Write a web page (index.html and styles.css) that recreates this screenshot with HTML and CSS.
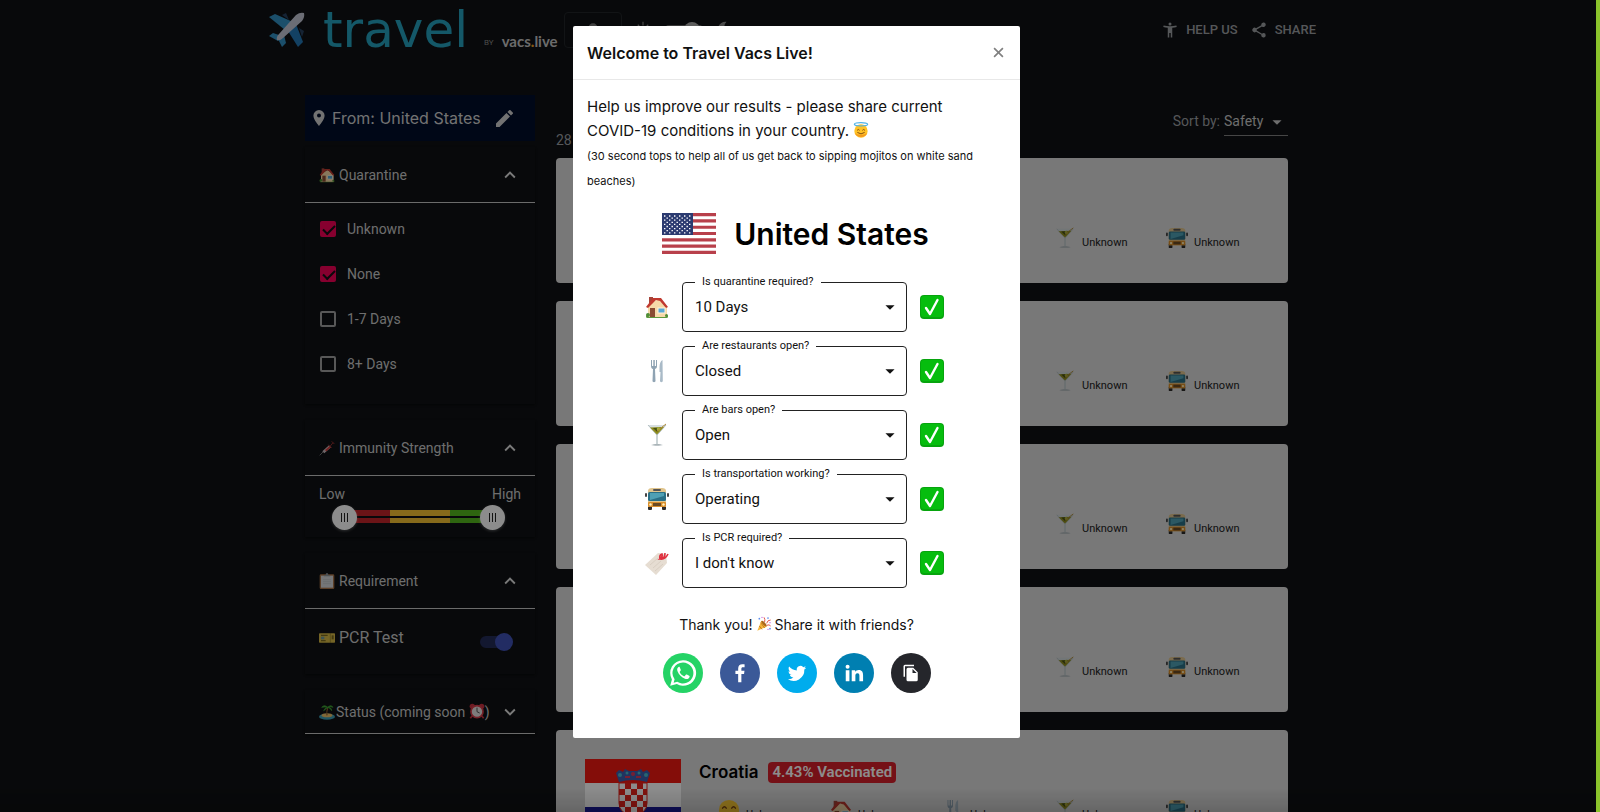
FILE: index.html
```html
<!DOCTYPE html>
<html lang="en">
<head>
    <meta charset="UTF-8">
    <meta name="viewport" content="width=device-width, initial-scale=1.0">
    <title>Travel Vacs Live</title>
    <link rel="stylesheet" href="styles.css">
</head>
<body>
    <!-- Emoji and icon sprites -->
    <svg class="sprites" aria-hidden="true">
        <symbol id="house" viewBox="0 0 24 24">
            <rect x="1" y="20" width="22" height="3" rx="1.5" fill="#5c9a3c"/>
            <rect x="4" y="2" width="4" height="7" fill="#a5443a"/>
            <path d="M3 11L13 4l9 8v10H3z" fill="#f6d9a8"/>
            <path d="M1 12L8 3h8l7 9-2 1-6-7-4-1-8 8z" fill="#c0392f"/>
            <rect x="5" y="13" width="5" height="9" fill="#8a4b32"/>
            <rect x="13" y="13" width="7" height="5" fill="#59a9d6" stroke="#fff3dc"/>
            <circle cx="3" cy="20" r="2" fill="#4f8d36"/><circle cx="21.5" cy="20.5" r="1.5" fill="#4f8d36"/>
        </symbol>
        <symbol id="cutlery" viewBox="0 0 24 24">
            <path d="M6 1v6c0 2 1 3 2 3l-.5 12c0 1.500 3 1.500 3 0L10 10c1.500-.5 2-1.500 2-3V1h-1v6h-1.200V1H8.300v6H7V1z" fill="#8fa3b3"/>
            <path d="M17.500 1c-2 1-3 4-3 7v5h1l-.5 9c0 1.500 2.800 1.500 2.800 0z" fill="#a9bac7"/>
        </symbol>
        <symbol id="cocktail" viewBox="0 0 24 24">
            <path d="M3 2h18l-8.300 10v9h-1.400v-9z" fill="#cdd6d8" opacity=".8"/>
            <path d="M3 2l9 10 9-10M12 12v9" fill="none" stroke="#b3bfc2"/>
            <path d="M5 4.500l14-.5-7 7.500z" fill="#8d8b1c"/>
            <path d="M8 5l8-.3-4 4z" fill="#454e16"/>
            <circle cx="13.500" cy="6" r="1.800" fill="#a8b13a"/><path d="M21 1L12 8" stroke="#b08a3a"/>
            <path d="M6 22c3-1.500 9-1.500 12 0-3 1-9 1-12 0z" fill="#aab4b8"/>
        </symbol>
        <symbol id="bus" viewBox="0 0 24 24">
            <rect x="3" y="18" width="4" height="5" rx="1" fill="#2d2a28"/><rect x="17" y="18" width="4" height="5" rx="1" fill="#2d2a28"/>
            <path d="M3 4q0-3 4-3h10q4 0 4 3v16H3z" fill="#e0c48c"/>
            <rect x="8" y="2" width="8" height="2" rx="1" fill="#555"/>
            <rect x="3" y="5" width="18" height="9" rx="1.500" fill="#2a6f86"/><path d="M5 6h14v3L5 13z" fill="#4fa0b4"/>
            <rect x="3" y="15" width="18" height="5" rx="1" fill="#d98e2b"/><rect x="8" y="16" width="8" height="3" fill="#6b4a22"/>
            <circle cx="5.500" cy="17.500" r="1.200" fill="#fff2c2"/><circle cx="18.500" cy="17.500" r="1.200" fill="#fff2c2"/>
            <rect x="0" y="6" width="2" height="4" rx="1" fill="#444"/><rect x="22" y="6" width="2" height="4" rx="1" fill="#444"/>
        </symbol>
        <symbol id="tag" viewBox="0 0 24 24">
            <path d="M0 14L13 2l8 1 1 9-11 12z" fill="#e6ddd2"/>
            <path d="M5 14l8-7M8 17l8-7M10 20l8-7" stroke="#d9cfc3"/>
            <path d="M15 8q-1-4 2-5 1 3-2 5 5 0 5-6M15 8q5 1 8-5" fill="none" stroke="#e0303f" stroke-width="1.600"/>
        </symbol>
        <symbol id="done" viewBox="0 0 24 24">
            <rect width="24" height="24" rx="4" fill="#07a40e"/><rect x="1" y="1" width="22" height="21" rx="3" fill="#06bd0e"/>
            <path d="M6 13l4 6L17.500 5" fill="none" stroke="#fff" stroke-width="2.400" stroke-linecap="round" stroke-linejoin="round"/>
        </symbol>
        <symbol id="angel" viewBox="0 0 24 24">
            <circle cx="12" cy="13.500" r="10" fill="#ffc224"/><path d="M3 17a10 10 0 0 0 18 0q-9 5-18 0z" fill="#f59a1d"/>
            <ellipse cx="12" cy="3.500" rx="10" ry="2.500" fill="none" stroke="#4fb2e8" stroke-width="1.800"/>
            <path d="M6.500 12q1.500-2 3 0M14.500 12q1.500-2 3 0M7 16q5 4 10 0" fill="none" stroke="#7a4312" stroke-width="1.400" stroke-linecap="round"/>
        </symbol>
        <symbol id="smile" viewBox="0 0 24 24">
            <circle cx="12" cy="12" r="11" fill="#ffcc33"/>
            <path d="M5 10q2-3 4 0M15 10q2-3 4 0M7 16q5 4 10 0" fill="none" stroke="#7a4312" stroke-width="1.500" stroke-linecap="round"/>
        </symbol>
        <symbol id="party" viewBox="0 0 24 24">
            <path d="M2 22L8 7q6 3 8 9z" fill="#f3b53c"/><path d="M5 15l4 5M7 10l6 8" stroke="#c97a1e" stroke-width="1.500"/>
            <ellipse cx="12" cy="11.500" rx="2" ry="5.500" transform="rotate(-42 12 11.500)" fill="#a9661c"/>
            <path d="M13 9q1-4-1-7M16 11q1-5 6-5M16 14q4-2 6 1" fill="none" stroke="#e2574c" stroke-width="1.500"/>
            <g fill="#5b8def"><circle cx="5" cy="4" r="1.300"/><circle cx="18" cy="3" r="1.300"/><circle cx="21" cy="19" r="1.300"/></g>
            <g fill="#c25be0"><circle cx="9" cy="2" r="1"/><circle cx="18" cy="20" r="1"/><circle cx="21" cy="10" r="1"/></g>
        </symbol>
        <symbol id="syringe" viewBox="0 0 24 24">
            <path d="M1 23l6-6" stroke="#aaa"/><path d="M5 17L15 8l3 3L8 20z" fill="#c9b9bd"/><path d="M9 15l7-6 2 2-7 6z" fill="#d63b3b"/>
            <path d="M14 7l5 5M17 9l4-5M19 2l4 4" stroke="#8d2e2e" stroke-width="1.500"/>
        </symbol>
        <symbol id="clipboard" viewBox="0 0 24 24">
            <rect x="1" y="2" width="22" height="22" rx="2" fill="#a87347"/><rect x="3" y="4" width="18" height="18" fill="#d5d8da"/>
            <path d="M7 5q0-2 3-2 0-3 2-3t2 3q3 0 3 2z" fill="#8b9298"/><path d="M6 10h12M6 13h12M6 16h12" stroke="#bcc0c3"/>
        </symbol>
        <symbol id="ticket" viewBox="0 0 24 24">
            <rect y="5" width="24" height="14" rx="1" fill="#d5b945"/><path d="M17 5v14" stroke="#6d5f1e" stroke-dasharray="2 1"/>
            <path d="M3 8h10M3 16h7" stroke="#7b6b22" stroke-width="2"/><rect x="3" y="10" width="5" height="4" fill="#6f9a9a"/><rect x="19" y="8" width="3" height="6" fill="#7b6b22"/>
        </symbol>
        <symbol id="island" viewBox="0 0 24 24">
            <ellipse cx="12" cy="19" rx="12" ry="4.500" fill="#3c9db5"/><ellipse cx="12" cy="17" rx="8" ry="3" fill="#e9bd66"/>
            <path d="M12 17q-1-6 1-11" fill="none" stroke="#8a5a2b" stroke-width="1.800"/>
            <path d="M13 5Q8 0 4 5q5-1 9 0-5 1-6 5 4-3 6-5 5 1 6 5 0-5-6-5 4-2 8 0-3-5-8 0z" fill="#3fa535" stroke="#3fa535"/>
        </symbol>
        <symbol id="clock" viewBox="0 0 24 24">
            <circle cx="5" cy="5" r="4" fill="#c83240"/><circle cx="19" cy="5" r="4" fill="#c83240"/>
            <path d="M5 19l-3 4M19 19l3 4" stroke="#c83240" stroke-width="2.500"/>
            <circle cx="12" cy="13" r="9" fill="#e6e2e2" stroke="#d63c4a" stroke-width="2.500"/><path d="M12 7v6l4 2" fill="none" stroke="#555" stroke-width="1.500"/>
        </symbol>
        <symbol id="up" viewBox="0 0 24 24"><path d="M12 8l-6 6 1.410 1.410L12 10.830l4.590 4.580L18 14z" fill="currentColor"/></symbol>
        <symbol id="down" viewBox="0 0 24 24"><path d="M16.590 8.590L12 13.170 7.410 8.590 6 10l6 6 6-6z" fill="currentColor"/></symbol>
        <symbol id="arrow" viewBox="0 0 24 24"><path d="M7 10l5 5 5-5z" fill="currentColor"/></symbol>
    </svg>

    <div class="page">
        <header class="header">
            <svg class="plane" viewBox="0 0 36 36" aria-hidden="true">
                <path d="M0 5l6-3 18 8-8 8z" fill="#3290c3"/><path d="M27 12l7 18-5 5-10-16z" fill="#2477b4"/>
                <path d="M0 24l4-3 9 3-4 5zM9 27l6-4 2 8-4 4z" fill="#3290c3"/>
                <path d="M13 3l4-2 3 7zM30 16l5 3-2 6z" fill="#27405f"/>
                <path d="M8 28q-1-3 2-6L27 3q4-3 8-2 1 4-2 8L14 26q-3 3-6 2z" fill="#c3c7d6"/>
            </svg>
            <span class="logo">travel</span>
            <span class="by">BY</span>
            <span class="brand">vacs<b>.</b>live</span>
            <button class="coffee" aria-label="Support"><svg viewBox="0 0 24 24"><circle cx="12" cy="12" r="8" fill="#777"/></svg></button>
            <svg class="sun" viewBox="0 0 24 24" aria-hidden="true"><circle cx="12" cy="12" r="4" fill="#888"/><path d="M12 1v5M12 18v5M1 12h5M18 12h5M5 5l3 3M16 16l3 3M19 5l-3 3M5 19l3-3" stroke="#888" stroke-width="1.500"/></svg>
            <input type="checkbox" class="theme" aria-label="Dark theme" checked>
            <svg class="moon" viewBox="0 0 24 24" aria-hidden="true"><path d="M14 1a11 11 0 1 0 8 17A10 10 0 0 1 14 1z" fill="#888"/></svg>
            <nav class="nav">
                <a href="#help"><svg viewBox="0 0 24 24"><path d="M20.500 6c-2.610.7-5.670 1-8.500 1s-5.890-.3-8.500-1L3 8c1.860.5 4 .830 6 1v13h2v-6h2v6h2V9c2-.170 4.140-.5 6-1zM12 6a2 2 0 1 0 0-4 2 2 0 0 0 0 4z" fill="currentColor"/></svg>HELP US</a>
                <a href="#share"><svg viewBox="0 0 24 24"><path d="M18 16.080c-.760 0-1.440.3-1.960.770L8.910 12.700a3.300 3.300 0 0 0 0-1.400l7.050-4.110A3 3 0 1 0 15 5c0 .240.040.470.090.7L8.040 9.810a3 3 0 1 0 0 4.380l7.120 4.160a2.920 2.920 0 1 0 2.840-2.270z" fill="currentColor"/></svg>SHARE</a>
            </nav>
        </header>

        <div class="content">
            <aside class="sidebar">
                <button class="from">
                    <svg class="pin" viewBox="5 2 14 20"><path d="M12 2a7 7 0 0 0-7 7c0 5.250 7 13 7 13s7-7.750 7-13a7 7 0 0 0-7-7zm0 9.500a2.500 2.500 0 1 1 0-5 2.500 2.500 0 0 1 0 5z" fill="currentColor"/></svg>
                    <span>From: United States</span>
                    <svg class="pencil" viewBox="3 3 18 18"><path d="M3 17.250V21h3.750L17.810 9.940l-3.750-3.750zM20.710 7.040a1 1 0 0 0 0-1.410l-2.340-2.340a1 1 0 0 0-1.410 0l-1.830 1.830 3.750 3.750z" fill="currentColor"/></svg>
                </button>

                <section class="panel quarantine">
                    <button class="panel-head"><svg class="emoji"><use href="#house"/></svg><span>Quarantine</span><svg class="chevron"><use href="#up"/></svg></button>
                    <div class="checks">
                        <label><input type="checkbox" checked>Unknown</label>
                        <label><input type="checkbox" checked>None</label>
                        <label><input type="checkbox">1-7 Days</label>
                        <label><input type="checkbox">8+ Days</label>
                    </div>
                </section>

                <section class="panel">
                    <button class="panel-head"><svg class="emoji"><use href="#syringe"/></svg><span>Immunity Strength</span><svg class="chevron"><use href="#up"/></svg></button>
                    <div class="strength">
                        <div class="ends"><label for="low">Low</label><label for="high">High</label></div>
                        <div class="range">
                            <input type="range" id="low" value="0">
                            <input type="range" id="high" value="100">
                        </div>
                    </div>
                </section>

                <section class="panel">
                    <button class="panel-head"><svg class="emoji"><use href="#clipboard"/></svg><span>Requirement</span><svg class="chevron"><use href="#up"/></svg></button>
                    <label class="pcr"><svg class="emoji"><use href="#ticket"/></svg><span>PCR Test</span><input type="checkbox" class="switch" checked></label>
                </section>

                <section class="panel">
                    <button class="panel-head status"><svg class="emoji"><use href="#island"/></svg><span>Status (coming soon <svg class="emoji"><use href="#clock"/></svg>)</span><svg class="chevron"><use href="#down"/></svg></button>
                </section>
            </aside>

            <main class="results">
                <div class="results-head">
                    <span>28</span>
                    <div class="sort">
                        <label for="sort">Sort by:</label>
                        <div class="sort-box"><select id="sort"><option>Safety</option></select><svg><use href="#arrow"/></svg></div>
                    </div>
                </div>

                <article class="card blank">
                    <div class="stats">
                        <span class="stat"><svg><use href="#cocktail"/></svg>Unknown</span>
                        <span class="stat"><svg><use href="#bus"/></svg>Unknown</span>
                    </div>
                </article>
                <article class="card blank">
                    <div class="stats">
                        <span class="stat"><svg><use href="#cocktail"/></svg>Unknown</span>
                        <span class="stat"><svg><use href="#bus"/></svg>Unknown</span>
                    </div>
                </article>
                <article class="card blank">
                    <div class="stats">
                        <span class="stat"><svg><use href="#cocktail"/></svg>Unknown</span>
                        <span class="stat"><svg><use href="#bus"/></svg>Unknown</span>
                    </div>
                </article>
                <article class="card blank">
                    <div class="stats">
                        <span class="stat"><svg><use href="#cocktail"/></svg>Unknown</span>
                        <span class="stat"><svg><use href="#bus"/></svg>Unknown</span>
                    </div>
                </article>
                <article class="card">
                    <svg class="flag" viewBox="0 0 96 72" role="img" aria-label="Flag of Croatia">
                        <rect width="96" height="24" fill="#f01812"/><rect y="24" width="96" height="24" fill="#fff"/><rect y="48" width="96" height="24" fill="#1a1a9c"/>
                        <path d="M34 24h28v20q0 11-14 12-14-1-14-12z" fill="#fff" stroke="#e8241c"/>
                        <path d="M40 24h6v6h-6zM52 24h6v6h-6zM34 30h6v6h-6zM46 30h6v6h-6zM58 30h4v6h-4zM40 36h6v6h-6zM52 36h6v6h-6zM34 42h6v6h-6zM46 42h6v6h-6zM58 42h4v6h-4zM40 48h6v6h-6zM52 48h6v6h-6z" fill="#e8241c"/>
                        <path d="M34 23l-3-9 3-3 4 2 2-3 4 2h8l4-2 2 3 4-2 3 3-3 9q-14-4-28 0z" fill="#3b5fb0"/>
                        <g fill="#49b8cc"><circle cx="35" cy="16" r="2"/><circle cx="42" cy="14" r="1.500"/><circle cx="54" cy="14" r="1.500"/><circle cx="61" cy="16" r="2"/></g>
                        <g fill="#d83a5c"><path d="M40 17h5v2h-5zM51 17h5v2h-5z"/><circle cx="48" cy="15" r="2"/></g>
                    </svg>
                    <div class="info">
                        <h2>Croatia <span class="badge">4.43% Vaccinated</span></h2>
                        <div class="stats">
                            <span class="stat"><svg><use href="#smile"/></svg>Unknown</span>
                            <span class="stat"><svg><use href="#house"/></svg>Unknown</span>
                            <span class="stat"><svg><use href="#cutlery"/></svg>Unknown</span>
                            <span class="stat"><svg><use href="#cocktail"/></svg>Unknown</span>
                            <span class="stat"><svg><use href="#bus"/></svg>Unknown</span>
                        </div>
                    </div>
                </article>
            </main>
        </div>
    </div>

    <div class="overlay">
        <div class="modal" role="dialog" aria-labelledby="modal-title">
            <div class="modal-head">
                <h1 id="modal-title">Welcome to Travel Vacs Live!</h1>
                <button class="close" aria-label="Close"><svg viewBox="0 0 10 10"><path d="M1 1l8 8M9 1L1 9" stroke="#808080" stroke-width="1.500"/></svg></button>
            </div>
            <div class="modal-body">
                <p class="intro">Help us improve our results - please share current COVID-19 conditions in your country. <svg class="emoji"><use href="#angel"/></svg></p>
                <p class="note">(30 second tops to help all of us get back to sipping mojitos on white sand beaches)</p>

                <div class="country">
                    <svg viewBox="0 0 54 41" role="img" aria-label="Flag of the United States">
                        <rect width="54" height="41" fill="#fff"/>
                        <path d="M0 1.600h54M0 7.900h54M0 14.200h54M0 20.500h54M0 26.800h54M0 33.100h54M0 39.400h54" stroke="#b8404b" stroke-width="3.150"/>
                        <rect width="31" height="22" fill="#2b3a70"/>
                        <path d="M2 3h28M2 7.200h28M2 11.400h28M2 15.600h28M2 19.800h28" stroke="#fff" stroke-width="1.300" stroke-dasharray="1.400 3.600"/>
                        <path d="M4.500 5.100h25M4.500 9.300h25M4.500 13.500h25M4.500 17.700h25" stroke="#fff" stroke-width="1.300" stroke-dasharray="1.400 3.600"/>
                    </svg>
                    <h2>United States</h2>
                </div>

                <form class="form">
                    <div class="row">
                        <svg><use href="#house"/></svg>
                        <div class="field"><label for="quarantine">Is quarantine required?</label><select id="quarantine"><option>10 Days</option></select><svg><use href="#arrow"/></svg></div>
                        <svg><use href="#done"/></svg>
                    </div>
                    <div class="row">
                        <svg><use href="#cutlery"/></svg>
                        <div class="field"><label for="restaurants">Are restaurants open?</label><select id="restaurants"><option>Closed</option></select><svg><use href="#arrow"/></svg></div>
                        <svg><use href="#done"/></svg>
                    </div>
                    <div class="row">
                        <svg><use href="#cocktail"/></svg>
                        <div class="field"><label for="bars">Are bars open?</label><select id="bars"><option>Open</option></select><svg><use href="#arrow"/></svg></div>
                        <svg><use href="#done"/></svg>
                    </div>
                    <div class="row">
                        <svg><use href="#bus"/></svg>
                        <div class="field"><label for="transport">Is transportation working?</label><select id="transport"><option>Operating</option></select><svg><use href="#arrow"/></svg></div>
                        <svg><use href="#done"/></svg>
                    </div>
                    <div class="row">
                        <svg><use href="#tag"/></svg>
                        <div class="field"><label for="pcr">Is PCR required?</label><select id="pcr"><option>I don't know</option></select><svg><use href="#arrow"/></svg></div>
                        <svg><use href="#done"/></svg>
                    </div>
                </form>

                <p class="thanks">Thank you! <svg class="emoji"><use href="#party"/></svg>Share it with friends?</p>
                <div class="share">
                    <button class="whatsapp" aria-label="Share on WhatsApp"><svg viewBox="0 0 24 24"><path d="M12 1a11 11 0 0 0-9.500 16.500L1 23l5.700-1.500A11 11 0 1 0 12 1zm0 2a9 9 0 1 1-4.900 16.600L4 20.300l.8-3A9 9 0 0 1 12 3z" fill="#fff"/><path d="M8.500 6.700c-1.300.5-1.900 2-1.200 3.800 1.200 3 3.500 5.300 6.400 6.400 1.900.7 3.500 0 3.900-1.500.1-.6.100-.9-.3-1.100l-2-1c-.4-.1-.6 0-.9.300l-.8 1c-.2.300-.5.300-.8.100-1.500-.7-2.700-1.700-3.500-3.200-.2-.3-.1-.5.100-.7.800-1 .9-1.100.7-1.500l-.9-2.200c-.1-.4-.4-.5-.7-.4z" fill="#fff"/></svg></button>
                    <button class="facebook" aria-label="Share on Facebook"><svg viewBox="0 0 24 24"><path d="M10 22v-9H7V9.500h3V7c0-3 1.800-4.600 4.500-4.600 1.300 0 2.400.1 2.500.2v3h-1.800c-1.400 0-1.700.7-1.700 1.700v2.200h3.400l-.5 3.500h-2.900v9z" fill="#fff"/></svg></button>
                    <button class="twitter" aria-label="Share on Twitter"><svg viewBox="0 0 24 24"><path d="M22 6.200c-.7.300-1.500.5-2.400.7.900-.5 1.500-1.300 1.800-2.300-.8.500-1.700.8-2.600 1a4.100 4.100 0 0 0-7 3.700c-3.400-.2-6.400-1.800-8.400-4.300-1.100 1.900-.5 4.300 1.200 5.500-.7 0-1.300-.2-1.800-.5 0 2 1.400 3.700 3.300 4.100-.6.200-1.200.2-1.900.1.500 1.600 2 2.800 3.900 2.800A8.300 8.300 0 0 1 2 18.700a11.700 11.700 0 0 0 18-10.400c.8-.6 1.500-1.300 2-2.100z" fill="#fff"/></svg></button>
                    <button class="linkedin" aria-label="Share on LinkedIn"><svg viewBox="0 0 24 24"><path d="M3 9h4v12H3zM5 3a2.200 2.200 0 1 1 0 4.400A2.200 2.200 0 0 1 5 3zM9.500 9h3.800v1.700c.6-1 1.900-2 3.800-2 4 0 4.800 2.600 4.800 6.100V21h-4v-5.500c0-1.500 0-3.300-2.100-3.300s-2.300 1.500-2.300 3.200V21h-4z" fill="#fff"/></svg></button>
                    <button class="copy" aria-label="Copy link"><svg viewBox="0 0 24 24"><path d="M16 1H4a2 2 0 0 0-2 2v14h2V3h12zm-1 4l6 6v10a2 2 0 0 1-2 2H8a2 2 0 0 1-2-2V7a2 2 0 0 1 2-2zm-1 7h5.500L14 6.500z" fill="#fff"/></svg></button>
                </div>
            </div>
        </div>
    </div>
</body>
</html>
```
FILE: styles.css
```css
* {
    box-sizing: border-box;
}

body {
    margin: 0;
    height: 100vh;
    overflow: hidden;
    background-color: #0f1114;
    color: #c8c8c8;
    font-family: Roboto, "Liberation Sans", sans-serif;
    font-size: 14px;
}

h1, h2, p {
    margin: 0;
}

button, select, input {
    font: inherit;
    color: inherit;
    margin: 0;
}

button {
    border: none;
    background: none;
    padding: 0;
    cursor: pointer;
}

select {
    appearance: none;
    border: none;
    background: none;
    outline: none;
}

.sprites {
    display: none;
}

.emoji {
    width: 16px;
    height: 16px;
    flex: none;
}

/* Header */
.page {
    height: 100vh;
    padding-right: 7px;
    overflow: hidden;
}

.header {
    display: flex;
    align-items: center;
    max-width: 1055px;
    height: 59px;
    margin: 0 auto 36px;
}

.plane {
    width: 36px;
    height: 36px;
    flex: none;
}

.logo {
    margin-left: 18px;
    color: #25a0bd;
    font-family: "DejaVu Sans", sans-serif;
    font-size: 50px;
    line-height: 52px;
}

.by {
    margin: 26px 8px 0 16px;
    color: #888;
    font-size: 8px;
}

.brand {
    margin-top: 22px;
    color: #c4c4c4;
    font-family: Lato, sans-serif;
    font-size: 15px;
    font-weight: bold;
}

.brand b {
    color: #f5a623;
}

.coffee {
    width: 58px;
    height: 36px;
    margin-left: 6px;
    border: 1px solid #222529;
    border-radius: 4px;
}

.coffee svg {
    width: 14px;
}

.sun, .moon {
    width: 18px;
    height: 18px;
    margin: 0 12px;
    flex: none;
}

.theme {
    appearance: none;
    width: 40px;
    height: 10px;
    border-radius: 5px;
    background-color: #666;
}

.theme::after {
    content: "";
    display: block;
    width: 16px;
    height: 16px;
    margin: -3px 0 0 20px;
    border-radius: 50%;
    background-color: #aaa;
}

.nav {
    display: flex;
    gap: 12px;
    margin-left: auto;
    padding-right: 8px;
}

.nav a {
    display: flex;
    align-items: center;
    gap: 7px;
    color: #9c9fa2;
    font-size: 13px;
    font-weight: 500;
    text-decoration: none;
}

.nav svg {
    width: 18px;
    height: 18px;
}

/* Sidebar */
.content {
    display: flex;
    gap: 21px;
    max-width: 983px;
    margin: 0 auto;
}

.sidebar {
    flex: 0 0 230px;
}

.from {
    display: flex;
    align-items: center;
    gap: 7px;
    width: 100%;
    height: 46px;
    padding: 0 8px;
    background-color: #000d2a;
    color: #d0d0d0;
    font-family: Inter, sans-serif;
    font-size: 16px;
}

.from .pin {
    width: 12px;
    height: 16px;
}

.from .pencil {
    width: 17px;
    height: 17px;
    margin-left: 8px;
}

.panel {
    margin-top: 16px;
    box-shadow: 0 1px 2px rgba(0, 0, 0, 0.5);
}

.panel.quarantine {
    margin-top: 6px;
    padding-bottom: 18px;
}

.panel-head {
    display: flex;
    align-items: center;
    gap: 4px;
    width: 100%;
    height: 56px;
    padding: 0 14px;
    border-bottom: 1px solid #c4c4c4;
    text-align: left;
}

.panel-head.status {
    gap: 1px;
    height: 44px;
}

.panel-head .emoji {
    vertical-align: -2px;
}

.chevron {
    width: 22px;
    height: 22px;
    margin-left: auto;
    color: #dedede;
}

.checks {
    display: flex;
    flex-direction: column;
    padding: 3px 15px 0;
}

.checks label {
    display: flex;
    align-items: center;
    gap: 11px;
    height: 45px;
}

.checks input {
    appearance: none;
    width: 16px;
    height: 16px;
    border: 2px solid #a0a0a0;
    border-radius: 2px;
}

.checks input:checked {
    border-color: #f50057;
    background-color: #f50057;
}

.checks input:checked::after {
    content: "";
    display: block;
    width: 10px;
    height: 5px;
    margin: 2px 0 0 1px;
    border-left: 2px solid #0f1114;
    border-bottom: 2px solid #0f1114;
    transform: rotate(-45deg);
}

.strength {
    padding: 8px 14px 7px;
}

.ends {
    display: flex;
    justify-content: space-between;
    line-height: 20px;
}

.range {
    position: relative;
    height: 26px;
    margin: 0 16px 0 13px;
    padding: 0 12px;
    background: linear-gradient(#0f1114, #0f1114) 0 12px / 100% 2px no-repeat,
        linear-gradient(to right, #c3252a 31%, #f5c132 31% 71%, #55b81e 71%) 0 6px / 100% 13px no-repeat;
    background-origin: content-box;
}

.range input {
    position: absolute;
    inset: 0;
    width: 100%;
    height: 26px;
    appearance: none;
    background: none;
    pointer-events: none;
}

.range input::-webkit-slider-thumb {
    appearance: none;
    width: 25px;
    height: 25px;
    border-radius: 50%;
    background: repeating-linear-gradient(to right, #222 0 1px, transparent 1px 3px) 9px 8px / 7px 9px no-repeat, #fff;
    box-shadow: 0 1px 3px rgba(255, 255, 255, 0.3);
    pointer-events: auto;
}

.pcr {
    display: flex;
    align-items: center;
    gap: 4px;
    height: 65px;
    padding: 0 23px 8px 14px;
    font-size: 16px;
}

.switch {
    appearance: none;
    width: 32px;
    height: 12px;
    margin: 8px 0 0 auto;
    border-radius: 6px;
    background-color: #242c58;
}

.switch::after {
    content: "";
    display: block;
    width: 18px;
    height: 18px;
    margin: -3px 0 0 15px;
    border-radius: 50%;
    background-color: #3f51b5;
}

/* Results */
.results {
    flex: 1;
    display: flex;
    flex-direction: column;
    gap: 18px;
}

.results-head {
    display: flex;
    justify-content: space-between;
    align-items: flex-end;
    height: 45px;
    padding-bottom: 4px;
    line-height: 20px;
    color: #9c9fa2;
}

.results-head > span {
    margin-bottom: -14px;
}

.sort {
    display: flex;
    gap: 4px;
}

.sort-box {
    display: flex;
    align-items: center;
    border-bottom: 1px solid #808080;
    color: #c8c8c8;
}

.sort-box select {
    padding: 0 2px 4px 0;
}

.sort-box svg {
    width: 22px;
    height: 22px;
    margin-bottom: 2px;
}

.card {
    display: flex;
    gap: 18px;
    min-height: 125px;
    padding: 29px 10px 24px 29px;
    border-radius: 4px;
    background-color: #dadada;
    color: #000;
}

.card.blank {
    justify-content: flex-end;
    padding: 69px 10px 34px;
}

.flag {
    width: 96px;
    height: 72px;
}

.info {
    flex: 1;
}

.info h2 {
    display: flex;
    align-items: center;
    gap: 10px;
    height: 26px;
    margin-bottom: 14px;
    font-family: Inter, sans-serif;
    font-size: 17px;
    font-weight: 600;
}

.badge {
    padding: 0 4px;
    border-radius: 4px;
    background-color: #d6202a;
    color: #fff;
    font-family: Roboto, sans-serif;
    font-size: 15px;
    line-height: 21px;
}

.stats {
    display: flex;
    justify-content: flex-end;
}

.stat {
    display: flex;
    align-items: flex-end;
    gap: 6px;
    width: 112px;
    color: #222;
    font-size: 11px;
    line-height: 12px;
}

.stat svg {
    width: 22px;
    height: 22px;
}

/* Modal */
.overlay {
    position: fixed;
    inset: 0;
    display: flex;
    justify-content: center;
    align-items: flex-start;
    padding: 26px 7px 0 0;
    border-right: 4px solid #8cc42c;
    background: linear-gradient(to top, rgba(0, 0, 0, 0.15), transparent 24px), rgba(0, 0, 0, 0.45);
    background-clip: padding-box;
}

.modal {
    width: 447px;
    margin-left: 4px;
    border-radius: 2px;
    background-color: #fff;
    color: #111;
    font-family: Inter, "Liberation Sans", sans-serif;
}

.modal-head {
    display: flex;
    align-items: center;
    justify-content: space-between;
    height: 54px;
    padding: 0 16px 0 14px;
    border-bottom: 1px solid #e8e8e8;
}

.modal-head h1 {
    font-size: 16px;
    font-weight: 600;
}

.close svg {
    display: block;
    width: 11px;
    height: 11px;
}

.modal-body {
    padding: 15px 14px 45px;
}

.intro {
    padding-right: 32px;
    font-size: 15px;
    line-height: 24px;
}

.intro .emoji {
    vertical-align: -2px;
}

.note {
    margin-top: 1px;
    font-size: 11px;
    line-height: 25px;
}

.country {
    display: flex;
    justify-content: center;
    align-items: center;
    gap: 18px;
    margin: 19px 2px 28px 0;
    color: #000;
}

.country svg {
    width: 54px;
    height: 41px;
}

.country h2 {
    font-size: 30px;
    font-weight: 600;
    line-height: 38px;
}

.form {
    display: flex;
    flex-direction: column;
    gap: 14px;
    padding-right: 4px;
}

.row {
    display: flex;
    justify-content: center;
    align-items: center;
    gap: 13px;
}

.row > svg {
    width: 24px;
    height: 24px;
}

.field {
    position: relative;
    width: 225px;
    font-family: Roboto, sans-serif;
}

.field label {
    position: absolute;
    top: -7px;
    left: 13px;
    padding: 0 7px;
    background-color: #fff;
    font-size: 11px;
    line-height: 14px;
}

.field select {
    display: block;
    width: 100%;
    height: 50px;
    padding: 0 12px;
    border: 1px solid #222;
    border-radius: 4px;
    font-size: 15px;
}

.field svg {
    position: absolute;
    top: 14px;
    right: 6px;
    width: 22px;
    height: 22px;
    pointer-events: none;
}

.thanks {
    margin-top: 27px;
    font-size: 14px;
    line-height: 20px;
    text-align: center;
}

.thanks .emoji {
    margin-right: 2px;
    vertical-align: -2px;
}

.share {
    display: flex;
    justify-content: center;
    gap: 17px;
    margin-top: 18px;
}

.share button {
    display: flex;
    align-items: center;
    justify-content: center;
    width: 40px;
    height: 40px;
    border-radius: 50%;
}

.share svg {
    width: 22px;
    height: 22px;
}

.share .whatsapp {
    background-color: #25d366;
}

.share .whatsapp svg {
    width: 28px;
    height: 28px;
}

.share .facebook {
    background-color: #3b5998;
}

.share .twitter {
    background-color: #00aced;
}

.share .linkedin {
    background-color: #007fb1;
}

.share .copy {
    background-color: #25262b;
}

.share .copy svg {
    width: 18px;
    height: 18px;
}
```
